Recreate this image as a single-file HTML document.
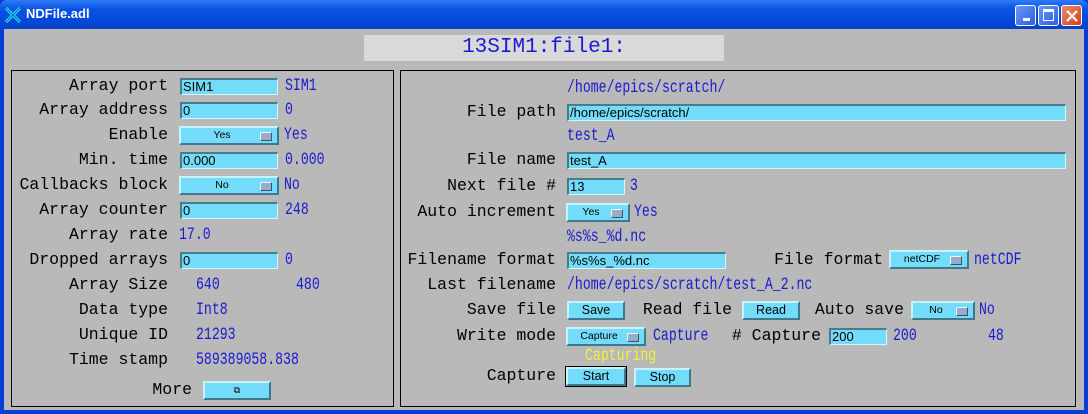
<!DOCTYPE html>
<html><head><style>
*{margin:0;padding:0;box-sizing:border-box}
body{width:1088px;height:414px;overflow:hidden;background:#0a3fd6;font-family:"Liberation Sans",sans-serif;position:relative}
.tb{position:absolute;left:0;top:0;width:1088px;height:29px;background:linear-gradient(#2f7bf5,#0a54e3 30%,#0346d8 80%,#0840c0);border-radius:7px 7px 0 0}
.tt{position:absolute;left:26px;top:6px;color:#fff;font-weight:bold;font-size:13px}
.cont{position:absolute;left:4px;top:29px;width:1080px;height:381px;background:#b9b9b9}
.wb{position:absolute;top:5px;width:21px;height:21px;border:1px solid #fff;border-radius:3px;background:linear-gradient(135deg,#6d96f5,#2a5fe0)}
.a{position:absolute;white-space:nowrap}
.L{position:absolute;white-space:nowrap;font-family:"Liberation Mono",monospace;font-size:16.5px;color:#000;text-align:right;line-height:18px}
.B{position:absolute;white-space:nowrap;font-family:"Liberation Mono",monospace;font-size:13.2px;color:#1a1ad0;line-height:18px;transform:scaleY(1.35)}
.in{position:absolute;height:17px;background:#73dcfa;border-top:2px solid #457d8a;border-left:2px solid #457d8a;border-bottom:1px solid #d8f4fc;border-right:1px solid #d8f4fc;font-size:13px;line-height:14px;padding-left:1px;color:#000}
.mn{position:absolute;height:19px;background:#73dcfa;border-top:2px solid #c8f2fc;border-left:2px solid #c8f2fc;border-bottom:2px solid #3f7888;border-right:2px solid #3f7888;font-size:10.5px;line-height:15px;text-align:center;padding-right:14px}
.mn:after{content:"";position:absolute;right:5px;top:4px;width:10px;height:7px;background:#9ac;border-top:1px solid #e8faff;border-left:1px solid #e8faff;border-bottom:1px solid #356;border-right:1px solid #356}
.bt{position:absolute;height:19px;background:#73dcfa;border-top:2px solid #c8f2fc;border-left:2px solid #c8f2fc;border-bottom:2px solid #3f7888;border-right:2px solid #3f7888;font-size:12.5px;line-height:15px;text-align:center}
.pan{position:absolute;border:1px solid #000}
</style></head><body>
<div class="tb"></div>
<svg class="a" style="left:5px;top:7px" width="16" height="16" viewBox="0 0 16 16"><path d="M1 1L15 15M15 1L1 15" stroke="#2ef" stroke-width="3"/><path d="M1 1L15 15M15 1L1 15" stroke="#06a" stroke-width="1"/></svg>
<div class="tt">NDFile.adl</div>
<div class="wb" style="left:1015px"><div class="a" style="left:7px;top:12px;width:7px;height:3px;background:#fff"></div></div>
<div class="wb" style="left:1038px"><div class="a" style="left:4px;top:3px;width:11px;height:12px;border:1px solid #fff;border-top:3px solid #fff"></div></div>
<div class="wb" style="left:1061px;background:linear-gradient(135deg,#f08a6a,#d0401a)"><svg class="a" style="left:4px;top:4px" width="12" height="12"><path d="M1 1L11 11M11 1L1 11" stroke="#fff" stroke-width="2.2"/></svg></div>
<div class="cont"></div>
<div class="a" style="left:364px;top:35px;width:360px;height:26px;background:#d9d9d9;color:#1a1ad0;font-family:'Liberation Mono',monospace;font-size:21px;text-align:center;line-height:26px">13SIM1:file1:</div>
<div class="pan" style="left:11px;top:70px;width:383px;height:337px"></div>
<div class="pan" style="left:400px;top:70px;width:676px;height:337px"></div>

<!-- left -->
<div class="L" style="right:920px;top:77px">Array port</div><div class="in" style="left:180px;top:78px;width:98px">SIM1</div><div class="B" style="left:285px;top:77px">SIM1</div>
<div class="L" style="right:920px;top:101px">Array address</div><div class="in" style="left:180px;top:102px;width:98px">0</div><div class="B" style="left:285px;top:101px">0</div>
<div class="L" style="right:920px;top:126px">Enable</div><div class="mn" style="left:179px;top:126px;width:100px">Yes</div><div class="B" style="left:284px;top:126px">Yes</div>
<div class="L" style="right:920px;top:151px">Min. time</div><div class="in" style="left:180px;top:152px;width:98px">0.000</div><div class="B" style="left:285px;top:151px">0.000</div>
<div class="L" style="right:920px;top:176px">Callbacks block</div><div class="mn" style="left:179px;top:176px;width:100px">No</div><div class="B" style="left:284px;top:176px">No</div>
<div class="L" style="right:920px;top:201px">Array counter</div><div class="in" style="left:180px;top:202px;width:98px">0</div><div class="B" style="left:285px;top:201px">248</div>
<div class="L" style="right:920px;top:226px">Array rate</div><div class="B" style="left:179px;top:226px">17.0</div>
<div class="L" style="right:920px;top:251px">Dropped arrays</div><div class="in" style="left:180px;top:252px;width:98px">0</div><div class="B" style="left:285px;top:251px">0</div>
<div class="L" style="right:920px;top:276px">Array Size</div><div class="B" style="left:196px;top:276px">640</div><div class="B" style="left:296px;top:276px">480</div>
<div class="L" style="right:920px;top:301px">Data type</div><div class="B" style="left:196px;top:301px">Int8</div>
<div class="L" style="right:920px;top:326px">Unique ID</div><div class="B" style="left:196px;top:326px">21293</div>
<div class="L" style="right:920px;top:351px">Time stamp</div><div class="B" style="left:196px;top:351px">589389058.838</div>
<div class="L" style="right:896px;top:381px">More</div><div class="bt" style="left:203px;top:381px;width:68px;font-size:9px">⧉</div>

<!-- right -->
<div class="B" style="left:567px;top:79px">/home/epics/scratch/</div>
<div class="L" style="right:532px;top:103px">File path</div><div class="in" style="left:567px;top:104px;width:499px">/home/epics/scratch/</div>
<div class="B" style="left:567px;top:127px">test_A</div>
<div class="L" style="right:532px;top:151px">File name</div><div class="in" style="left:567px;top:152px;width:499px">test_A</div>
<div class="L" style="right:532px;top:177px">Next file #</div><div class="in" style="left:567px;top:178px;width:58px">13</div><div class="B" style="left:630px;top:177px">3</div>
<div class="L" style="right:532px;top:203px">Auto increment</div><div class="mn" style="left:566px;top:203px;width:64px">Yes</div><div class="B" style="left:634px;top:203px">Yes</div>
<div class="B" style="left:567px;top:228px">%s%s_%d.nc</div>
<div class="L" style="right:532px;top:251px">Filename format</div><div class="in" style="left:567px;top:252px;width:159px">%s%s_%d.nc</div>
<div class="L" style="right:205px;top:251px">File format</div><div class="mn" style="left:889px;top:250px;width:80px">netCDF</div><div class="B" style="left:974px;top:251px">netCDF</div>
<div class="L" style="right:532px;top:276px">Last filename</div><div class="B" style="left:567px;top:276px">/home/epics/scratch/test_A_2.nc</div>
<div class="L" style="right:532px;top:301px">Save file</div><div class="bt" style="left:567px;top:301px;width:58px">Save</div>
<div class="L" style="right:356px;top:301px">Read file</div><div class="bt" style="left:742px;top:301px;width:58px">Read</div>
<div class="L" style="right:184px;top:301px">Auto save</div><div class="mn" style="left:911px;top:301px;width:64px">No</div><div class="B" style="left:979px;top:301px">No</div>
<div class="L" style="right:532px;top:327px">Write mode</div><div class="mn" style="left:566px;top:327px;width:80px">Capture</div><div class="B" style="left:653px;top:327px">Capture</div>
<div class="L" style="right:267px;top:327px"># Capture</div><div class="in" style="left:829px;top:328px;width:58px">200</div><div class="B" style="left:893px;top:327px">200</div><div class="B" style="left:988px;top:327px">48</div>
<div class="B" style="left:585px;top:347px;color:#f5f03a">Capturing</div>
<div class="L" style="right:532px;top:367px">Capture</div>
<div class="bt" style="left:566px;top:367px;width:60px;outline:1px solid #000">Start</div><div class="bt" style="left:634px;top:368px;width:57px">Stop</div>
</body></html>
